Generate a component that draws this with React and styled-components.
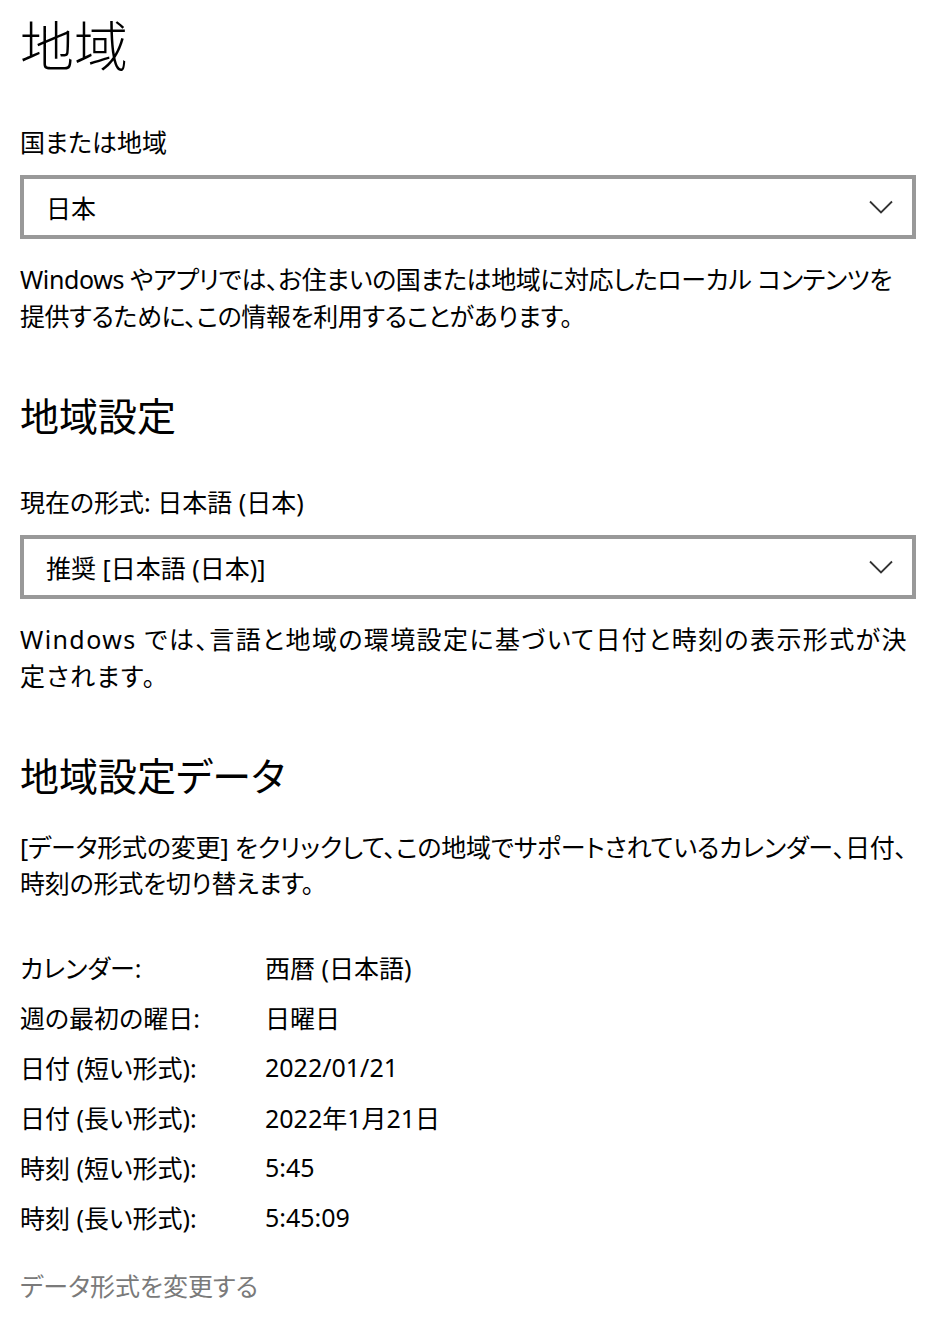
import React from 'react'
import styled, { createGlobalStyle } from 'styled-components'

const GlobalStyle = createGlobalStyle`
  html, body {
    margin: 0;
    padding: 0;
    background: #ffffff;
  }
  body {
    font-family: "Noto Sans", "Noto Sans CJK JP", sans-serif;
    color: #000000;
    font-feature-settings: "palt";
  }
`

const Page = styled.main`
  width: 927px;
  padding: 14px 0 0 20px;
  box-sizing: border-box;
`

const Title = styled.h1`
  margin: 0;
  font-size: 54px;
  line-height: 64px;
  font-weight: 300;
`

const Heading = styled.h2`
  margin: ${props => props.gap}px 0 0;
  font-size: 39px;
  line-height: 52px;
  font-weight: 400;
`

const Label = styled.div`
  margin-top: ${props => props.gap}px;
  font-size: 25px;
  line-height: 37px;
`

const Select = styled.div`
  margin-top: 14px;
  width: 896px;
  height: 64px;
  box-sizing: border-box;
  border: 4px solid #999999;
  display: flex;
  align-items: center;
  justify-content: space-between;
  padding: 0 19px 0 22px;
  font-size: 25px;
`

const Desc = styled.p`
  margin: ${props => props.gap}px 0 0;
  font-size: 25px;
  line-height: ${props => props.lh || 37}px;
`

const Line = styled.span`
  display: block;
  white-space: nowrap;
  letter-spacing: ${props => props.spread || 0}px;
`

const DataGrid = styled.dl`
  margin: 41px 0 0;
  display: grid;
  grid-template-columns: 245px 1fr;
  grid-auto-rows: 50px;
  align-items: center;
  font-size: 25px;
`

const Term = styled.dt`
  margin: 0;
`

const Value = styled.dd`
  margin: 0;
`

const Link = styled.a`
  display: block;
  margin-top: 26px;
  font-size: 25px;
  line-height: 37px;
  color: #7a7a7a;
  text-decoration: none;
`

function Chevron() {
  return (
    <svg width="24" height="14" viewBox="0 0 24 14">
      <polyline points="1,1.5 12,12.5 23,1.5" fill="none" stroke="#333333" strokeWidth="1.8" />
    </svg>
  )
}

const rows = [
  ['カレンダー:', '西暦 (日本語)'],
  ['週の最初の曜日:', '日曜日'],
  ['日付 (短い形式):', '2022/01/21'],
  ['日付 (長い形式):', '2022年1月21日'],
  ['時刻 (短い形式):', '5:45'],
  ['時刻 (長い形式):', '5:45:09'],
]

export default function App() {
  return (
    <Page>
      <GlobalStyle />
      <Title>地域</Title>

      <Label gap={46}>国または地域</Label>
      <Select>
        <span>日本</span>
        <Chevron />
      </Select>
      <Desc gap={22}>
        <Line spread={-0.4}>Windows やアプリでは、お住まいの国または地域に対応したローカル コンテンツを</Line>
        <Line spread={-0.4}>提供するために、この情報を利用することがあります。</Line>
      </Desc>

      <Heading gap={55}>地域設定</Heading>
      <Label gap={42}>現在の形式: 日本語 (日本)</Label>
      <Select>
        <span>推奨 [日本語 (日本)]</span>
        <Chevron />
      </Select>
      <Desc gap={22}>
        <Line spread={1.4}>Windows では、言語と地域の環境設定に基づいて日付と時刻の表示形式が決</Line>
        <Line spread={1.4}>定されます。</Line>
      </Desc>

      <Heading gap={55}>地域設定データ</Heading>
      <Desc gap={27} lh={36}>
        <Line spread={-0.2}>[データ形式の変更] をクリックして、この地域でサポートされているカレンダー、日付、</Line>
        <Line spread={-0.2}>時刻の形式を切り替えます。</Line>
      </Desc>

      <DataGrid>
        {rows.map(([k, v]) => (
          <React.Fragment key={k}>
            <Term>{k}</Term>
            <Value>{v}</Value>
          </React.Fragment>
        ))}
      </DataGrid>

      <Link href="#">データ形式を変更する</Link>
    </Page>
  )
}
